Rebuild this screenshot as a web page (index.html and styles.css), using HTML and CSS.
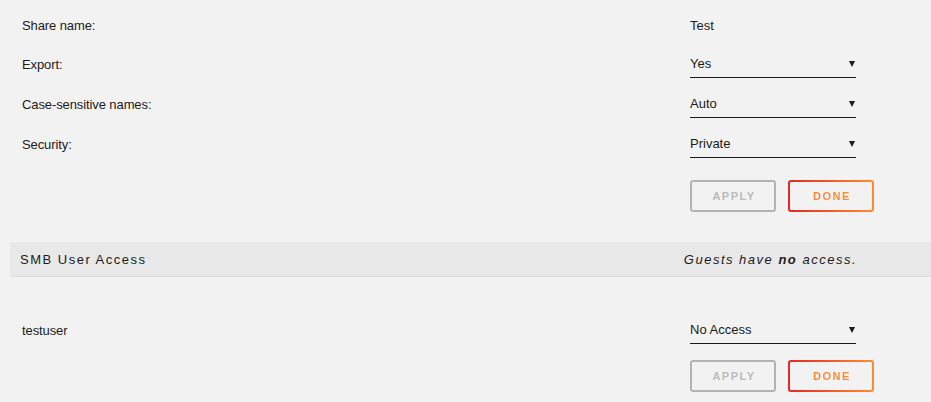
FILE: index.html
```html
<!DOCTYPE html>
<html lang="en">
<head>
<meta charset="utf-8">
<title>Share settings</title>
<link rel="stylesheet" href="styles.css">
</head>
<body>
  <form class="settings">
    <div class="row row-first">
      <span class="label">Share name:</span>
      <span class="value">Test</span>
    </div>
    <div class="row">
      <span class="label">Export:</span>
      <span class="select"><span class="select-text">Yes</span></span>
    </div>
    <div class="row">
      <span class="label">Case-sensitive names:</span>
      <span class="select"><span class="select-text">Auto</span></span>
    </div>
    <div class="row">
      <span class="label">Security:</span>
      <span class="select"><span class="select-text">Private</span></span>
    </div>
    <div class="actions actions-top">
      <button type="button" class="btn btn-apply">APPLY</button>
      <button type="button" class="btn btn-done"><span class="btn-done-text">DONE</span></button>
    </div>
  </form>

  <div class="band">
    <span class="band-title">SMB User Access</span>
    <span class="band-note">Guests have <b>no</b> access.</span>
  </div>

  <form class="settings users">
    <div class="row">
      <span class="label">testuser</span>
      <span class="select"><span class="select-text">No Access</span></span>
    </div>
    <div class="actions actions-bottom">
      <button type="button" class="btn btn-apply">APPLY</button>
      <button type="button" class="btn btn-done"><span class="btn-done-text">DONE</span></button>
    </div>
  </form>
</body>
</html>
```
FILE: styles.css
```css
html, body {
  margin: 0;
  padding: 0;
  background: #f2f2f2;
}

body {
  font-family: "Liberation Sans", Arial, sans-serif;
  font-size: 13px;
  color: #1c1b1b;
  width: 931px;
  height: 402px;
  overflow: hidden;
}

.settings {
  display: flex;
  flex-direction: column;
  padding-left: 22px;
  margin: 0;
}

.settings:first-child {
  padding-top: 6px;
}

.row {
  display: flex;
  align-items: center;
  height: 40px;
}

.row-first {
  height: 38px;
}

.label {
  width: 668px;
  flex: none;
  letter-spacing: -0.1px;
}

.value {
  flex: none;
}

/* dropdown: text with underline and a small down triangle */
.select {
  position: relative;
  display: flex;
  align-items: center;
  box-sizing: border-box;
  width: 166px;
  height: 28px;
  border-bottom: 1px solid #1c1b1b;
}

.select::after {
  content: "";
  position: absolute;
  right: 1px;
  top: 11px;
  width: 0;
  height: 0;
  border-left: 3px solid transparent;
  border-right: 3px solid transparent;
  border-top: 6px solid #1c1b1b;
}

.actions {
  display: flex;
  gap: 12px;
  padding-left: 668px;
}

.actions-top {
  margin-top: 16px;
}

.actions-bottom {
  margin-top: 10px;
}

.btn {
  box-sizing: border-box;
  width: 86px;
  height: 32px;
  border-radius: 3px;
  font-family: "Liberation Sans", Arial, sans-serif;
  font-size: 11px;
  font-weight: bold;
  letter-spacing: 1.5px;
  padding: 0 0 0 2px;
  cursor: pointer;
}

.btn-apply {
  border: 2px solid #b3b3b3;
  background: #f2f2f2;
  color: #bbbbbb;
}

.btn-done {
  border: 2px solid transparent;
  background:
    linear-gradient(#f2f2f2, #f2f2f2) padding-box,
    linear-gradient(90deg, #e22828, #ff8c2f) border-box;
}

.btn-done-text {
  background: linear-gradient(90deg, #f5833a, #ff8c2f);
  -webkit-background-clip: text;
  background-clip: text;
  color: transparent;
}

/* section header strip */
.band {
  display: flex;
  justify-content: space-between;
  align-items: center;
  box-sizing: border-box;
  height: 35px;
  margin: 30px 0 0 10px;
  padding: 0 74px 0 10px;
  background: #e8e8e8;
  border-bottom: 1px solid #dcdcdc;
  letter-spacing: 1.5px;
}

.band-title {
  font-size: 13px;
  color: #1c1b1b;
}

.band-note {
  font-size: 13px;
  font-style: italic;
  color: #1c1b1b;
}

.users {
  margin-top: 33px;
}
```
